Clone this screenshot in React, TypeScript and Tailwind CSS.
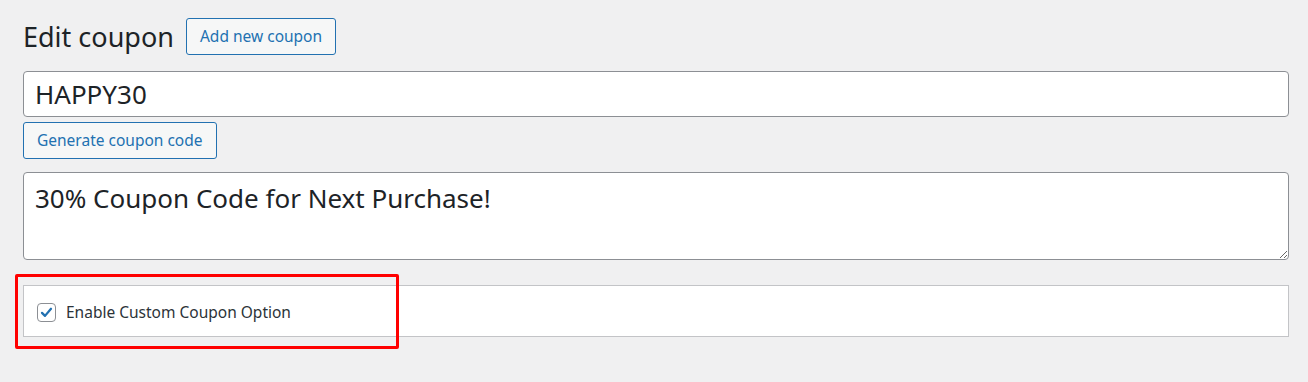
import React from 'react';

const font = { fontFamily: '"Noto Sans", "Open Sans", sans-serif' };

export default function App() {
  return (
    <div
      className="w-[1308px] h-[382px] bg-[#f0f0f1] text-[#1d2327] overflow-hidden relative"
      style={font}
    >
      <div className="pl-[23px] pr-[19px] pt-[18px]">
        {/* Title row */}
        <div className="flex items-center gap-[12px]">
          <h1 className="text-[27px] leading-none font-normal">Edit coupon</h1>
          <button className="h-[37px] px-[13px] border border-[#2271b1] rounded-[3px] bg-[#f6f7f7] text-[#2271b1] text-[15.5px]">
            Add new coupon
          </button>
        </div>

        {/* Coupon code */}
        <input
          readOnly
          value="HAPPY30"
          className="mt-[16px] block w-full h-[46px] px-[11px] bg-white border border-[#8c8f94] rounded-[4px] text-[26px] text-[#1d2327] outline-none"
        />
        <button className="mt-[5px] h-[37px] px-[13px] border border-[#2271b1] rounded-[3px] bg-[#f6f7f7] text-[#2271b1] text-[15.5px]">
          Generate coupon code
        </button>

        {/* Description */}
        <textarea
          readOnly
          value="30% Coupon Code for Next Purchase!"
          className="mt-[13px] block w-full h-[88px] px-[11px] pt-[9px] bg-white border border-[#8c8f94] rounded-[4px] text-[26px] leading-[1.3] text-[#1d2327] outline-none resize-y"
        />

        {/* Option panel */}
        <div className="mt-[25px] h-[52px] bg-white border border-[#c3c4c7] flex items-center pl-[13px] pt-[3px]">
          <span className="w-[19px] h-[19px] rounded-[4px] border border-[#8c8f94] bg-white flex items-center justify-center">
            <svg width="15" height="15" viewBox="0 0 20 20">
              <path
                d="M4 10.5 L8 14.5 L16 5"
                fill="none"
                stroke="#2271b1"
                strokeWidth="3"
                strokeLinecap="round"
                strokeLinejoin="round"
              />
            </svg>
          </span>
          <span className="ml-[10px] text-[15.5px] text-[#2c3338]">Enable Custom Coupon Option</span>
        </div>
      </div>

      {/* Red highlight annotation */}
      <div className="absolute left-[15px] top-[274px] w-[384px] h-[75px] border-[3px] border-[#ff0000] rounded-[2px] pointer-events-none" />
    </div>
  );
}
